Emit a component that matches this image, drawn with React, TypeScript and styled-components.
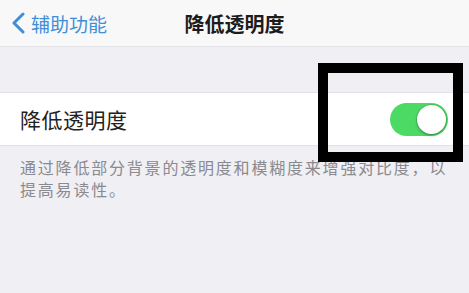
import styled, { createGlobalStyle } from "styled-components";

const GlobalStyle = createGlobalStyle`
  html, body {
    margin: 0;
    padding: 0;
    background: #efeff4;
    font-family: "Noto Sans CJK SC", "Noto Sans", sans-serif;
  }
`;

const Page = styled.div`
  position: relative;
  width: 469px;
  height: 293px;
  background: #efeff4;
  overflow: hidden;
`;

const NavBar = styled.header`
  display: grid;
  grid-template-columns: 1fr auto 1fr;
  align-items: center;
  height: 47px;
  background: #f8f8f8;
  border-bottom: 1px solid #e4e4e8;
  box-sizing: border-box;
`;

const BackButton = styled.div`
  display: flex;
  align-items: center;
  gap: 6px;
  padding-left: 11px;
  color: #3f8fd8;
  font-size: 19px;
`;

const Title = styled.h1`
  margin: 0;
  font-size: 20px;
  font-weight: 700;
  color: #1c1c1c;
`;

const Group = styled.section`
  margin-top: 45px;
`;

const Row = styled.div`
  display: flex;
  align-items: center;
  justify-content: space-between;
  height: 52px;
  padding: 0 21px 0 20px;
  background: #ffffff;
  border-top: 1px solid #e2e2e6;
  border-bottom: 1px solid #e2e2e6;
`;

const RowLabel = styled.span`
  font-size: 21px;
  letter-spacing: 0.5px;
  color: #222;
`;

const Switch = styled.div<{ $on: boolean }>`
  position: relative;
  width: 58px;
  height: 33px;
  border-radius: 17px;
  background: ${(p) => (p.$on ? "#4cd964" : "#e5e5ea")};
`;

const Knob = styled.span<{ $on: boolean }>`
  position: absolute;
  top: 2px;
  left: ${(p) => (p.$on ? "27px" : "2px")};
  width: 29px;
  height: 29px;
  border-radius: 50%;
  background: #fff;
  box-shadow: 0 0 0 1px rgba(0, 0, 0, 0.12), 0 2px 3px rgba(0, 0, 0, 0.2);
`;

const Footer = styled.p`
  margin: 0;
  padding: 10px 14px 0 20px;
  font-size: 16px;
  line-height: 22px;
  letter-spacing: 1.8px;
  color: #8a8a8f;
`;

const Highlight = styled.div`
  position: absolute;
  left: 318px;
  top: 63px;
  width: 145px;
  height: 99px;
  border: 10px solid #000;
  box-sizing: border-box;
`;

function App() {
  return (
    <Page>
      <GlobalStyle />
      <NavBar>
        <BackButton>
          <svg width="14" height="22" viewBox="0 0 14 22">
            <path d="M12 2 L3 11 L12 20" fill="none" stroke="#3f8fd8" strokeWidth="3" strokeLinecap="round" strokeLinejoin="round" />
          </svg>
          辅助功能
        </BackButton>
        <Title>降低透明度</Title>
        <div />
      </NavBar>
      <Group>
        <Row>
          <RowLabel>降低透明度</RowLabel>
          <Switch $on>
            <Knob $on />
          </Switch>
        </Row>
        <Footer>通过降低部分背景的透明度和模糊度来增强对比度，以提高易读性。</Footer>
      </Group>
      <Highlight />
    </Page>
  );
}

export default App;
